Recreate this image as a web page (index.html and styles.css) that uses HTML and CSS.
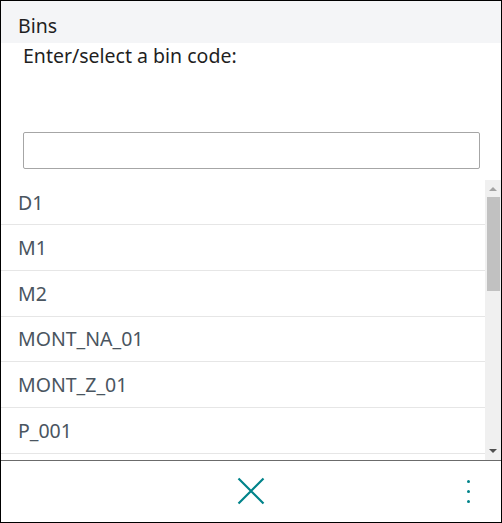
FILE: index.html
```html
<!DOCTYPE html>
<html lang="en">
<head>
<meta charset="utf-8">
<title>Bins</title>
<link rel="stylesheet" href="styles.css">
</head>
<body>
<div class="app">
  <header class="header">Bins</header>
  <div class="prompt">Enter/select a bin code:</div>
  <div class="field"><input class="input" type="text" aria-label="Bin code"></div>
  <div class="listwrap">
    <ul class="list">
      <li class="row">D1</li>
      <li class="row">M1</li>
      <li class="row">M2</li>
      <li class="row">MONT_NA_01</li>
      <li class="row">MONT_Z_01</li>
      <li class="row">P_001</li>
    </ul>
    <div class="scrollbar" aria-hidden="true">
      <span class="arrow up"></span>
      <span class="thumb"></span>
      <span class="track"></span>
      <span class="arrow down"></span>
    </div>
  </div>
  <footer class="footer">
    <span></span>
    <button class="close" aria-label="Close">
      <svg width="28" height="28" viewBox="0 0 28 28"><path d="M1.5 1.5 L26.5 26.5 M26.5 1.5 L1.5 26.5" stroke="#00838a" stroke-width="2.2" fill="none"/></svg>
    </button>
    <span class="end">
      <button class="more" aria-label="More options"><i></i><i></i><i></i></button>
    </span>
  </footer>
</div>
</body>
</html>
```

FILE: styles.css
```css
html, body { margin: 0; padding: 0; background: #fff; }
.app {
  width: 502px; height: 523px; box-sizing: border-box;
  border: 1px solid #000;
  display: flex; flex-direction: column;
  font-family: "Segoe UI", "Noto Sans", "DejaVu Sans", sans-serif;
  overflow: hidden;
}
.header {
  height: 42px; box-sizing: border-box; flex: none;
  background: #f4f5f7; color: #1f1f1f;
  font-size: 19.5px; padding: 12px 0 0 17px; line-height: 26px;
}
.prompt {
  flex: none; color: #1f1f1f; font-size: 19.5px; line-height: 26px;
  padding: 0 0 0 22px; height: 89px; box-sizing: border-box;
}
.field { flex: none; padding: 0 21px 0 22px; }
.input {
  display: block; width: 100%; height: 37px; box-sizing: border-box;
  border: 1px solid #a6a6a6; border-radius: 2px; margin: 0; padding: 0 8px;
  font: inherit; font-size: 19px; background: #fff;
}
.listwrap {
  flex: 1; min-height: 0; margin-top: 11px;
  display: flex; border-bottom: 1px solid #6b6b6b; overflow: hidden;
}
.list { list-style: none; margin: 0; padding: 0; flex: 1; min-width: 0; }
.row {
  height: 45.8px; box-sizing: border-box; border-bottom: 1px solid #e6e6e6;
  padding: 0 0 0 17px; display: flex; align-items: center;
  font-size: 19.5px; color: #4a5560;
}
.row:first-child { height: 45px; }
.scrollbar {
  flex: none; width: 16px; background: #f0f0f0;
  display: flex; flex-direction: column; align-items: center;
}
.arrow { flex: none; width: 0; height: 0; border-left: 4px solid transparent; border-right: 4px solid transparent; }
.arrow.up { border-bottom: 4px solid #a3a3a3; margin: 7px 0 6px; }
.arrow.down { border-top: 4px solid #505050; margin: 0 0 7px; }
.thumb { flex: none; width: 13px; height: 94px; background: #c1c1c1; margin-left: 1px; }
.track { flex: 1; }
.footer {
  flex: none; height: 61px;
  display: grid; grid-template-columns: 1fr auto 1fr; align-items: center;
}
.end { display: flex; justify-content: flex-end; padding-right: 25px; }
.close { background: none; border: 0; padding: 0; width: 28px; height: 28px; display: flex; margin-top: -1px; }
.more { background: none; border: 0; padding: 4px 6px; display: flex; flex-direction: column; gap: 7px; align-items: center; margin-top: -1px; }
.more i { display: block; width: 3px; height: 3px; border-radius: 50%; background: #00838a; }
```
